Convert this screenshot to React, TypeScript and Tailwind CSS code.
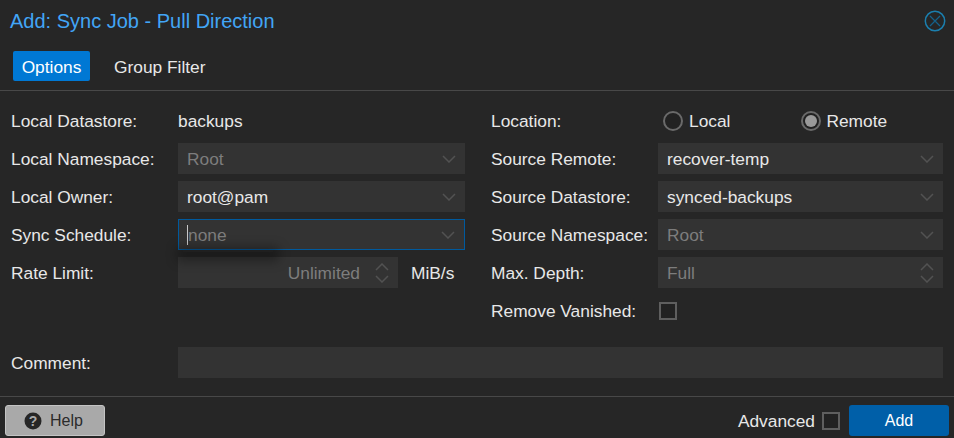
import React from "react";

const Chevron = ({ up = false }: { up?: boolean }) => (
  <svg width="14" height="8" viewBox="0 0 14 8" fill="none" stroke="#525252" strokeWidth="1.5" className={up ? "rotate-180" : ""}>
    <path d="M1 1 L7 7 L13 1" />
  </svg>
);

const Label = ({ children }: { children: React.ReactNode }) => (
  <div className="w-[167px] shrink-0 whitespace-nowrap pt-px text-[#e8e8e8]">{children}</div>
);

const Field = ({
  value,
  dim = false,
  focus = false,
}: {
  value: string;
  dim?: boolean;
  focus?: boolean;
}) => (
  <div
    className={`relative flex h-[31px] flex-1 items-center justify-between bg-[#333333] pl-[9px] pr-[9px] ${
      focus ? "border border-[#005a9e] pl-[8px] pr-[8px]" : ""
    } ${dim ? "text-[#7d7d7d]" : "text-[#e8e8e8]"}`}
  >
    {focus && <span className="absolute left-[8px] top-[5px] h-[20px] w-px bg-[#c8c8c8]" />}
    <span className="pt-px">{value}</span>
    <Chevron />
  </div>
);

const Spinner = () => (
  <div className="flex flex-col gap-[4px]">
    <Chevron up />
    <Chevron />
  </div>
);

const Row = ({ label, children }: { label: string; children: React.ReactNode }) => (
  <div className="flex h-[31px] items-center">
    <Label>{label}</Label>
    {children}
  </div>
);

const Check = () => <div className="h-[18px] w-[18px] border-2 border-[#5f5f5f] bg-[#222222]" />;

export default function App() {
  return (
    <div className="flex h-[438px] w-[954px] flex-col overflow-hidden bg-[#262626] font-['Liberation_Sans',Arial,sans-serif] text-[17.33px] leading-[20px] text-[#e8e8e8]">
      <div className="flex h-[41px] shrink-0 items-center justify-between pl-[10px] pr-[8px]">
        <div className="text-[20px] text-[#42a5f5]">Add: Sync Job - Pull Direction</div>
        <svg width="22" height="22" viewBox="0 0 22 22" fill="none" className="mt-px">
          <circle cx="11" cy="11" r="9.7" stroke="#1b7fae" strokeWidth="1.5" />
          <path d="M6 6 L16 16 M16 6 L6 16" stroke="#15618a" strokeWidth="1.3" />
        </svg>
      </div>

      <div className="flex h-[50px] shrink-0 items-start gap-[24px] border-b border-[#484848] pl-[13px] pt-[10px]">
        <div className="flex h-[30px] w-[77px] items-center justify-center rounded-[2px] bg-[#0078d4] pt-px text-white">Options</div>
        <div className="flex h-[30px] items-center pt-px text-[#e8e8e8]">Group Filter</div>
      </div>

      <div className="flex flex-1 flex-col px-[11px] pt-[14px]">
        <div className="grid grid-cols-[454px_452px] gap-x-[26px]">
          <div className="flex flex-col gap-[7px]">
            <Row label="Local Datastore:"><span className="pt-px">backups</span></Row>
            <Row label="Local Namespace:"><Field value="Root" dim /></Row>
            <Row label="Local Owner:"><Field value="root@pam" /></Row>
            <div className="relative">
              <Row label="Sync Schedule:"><Field value="none" dim focus /></Row>
              <div className="absolute left-[172px] top-[31px] h-[2px] w-[90px] bg-[#1f1f1f] shadow-[0_3px_11px_6px_rgba(0,0,0,0.34)]" />
            </div>
            <Row label="Rate Limit:">
              <div className="flex h-[31px] w-[220px] items-center justify-end gap-[15px] bg-[#333333] pr-[9px] text-[#7d7d7d]">
                <span className="pt-px">Unlimited</span>
                <Spinner />
              </div>
              <span className="ml-[13px] pt-px">MiB/s</span>
            </Row>
          </div>
          <div className="flex flex-col gap-[7px]">
            <Row label="Location:">
              <div className="ml-[5px] flex items-center gap-[6px] pt-[1px]">
                <span className="h-[20px] w-[20px] rounded-full border-2 border-[#6a6a6a] bg-[#222222]" />
                <span>Local</span>
              </div>
              <div className="ml-[71px] flex items-center gap-[4px] pt-[1px]">
                <span className="flex h-[20px] w-[20px] items-center justify-center rounded-full border-2 border-[#6a6a6a] bg-[#222222]">
                  <span className="h-[12px] w-[12px] rounded-full bg-[#9a9a9a]" />
                </span>
                <span className="pl-px">Remote</span>
              </div>
            </Row>
            <Row label="Source Remote:"><Field value="recover-temp" /></Row>
            <Row label="Source Datastore:"><Field value="synced-backups" /></Row>
            <Row label="Source Namespace:"><Field value="Root" dim /></Row>
            <Row label="Max. Depth:">
              <div className="flex h-[31px] flex-1 items-center justify-between bg-[#333333] pl-[9px] pr-[9px] text-[#7d7d7d]">
                <span className="pt-px">Full</span>
                <Spinner />
              </div>
            </Row>
            <Row label="Remove Vanished:"><span className="ml-px mt-px"><Check /></span></Row>
          </div>
        </div>
        <div className="mt-[21px] flex h-[31px] items-center">
          <Label>Comment:</Label>
          <div className="h-[31px] flex-1 bg-[#333333]" />
        </div>
      </div>

      <div className="flex h-[42px] shrink-0 items-start justify-between border-t border-[#484848] pl-[5px] pr-[5px] pt-[8px]">
        <div className="flex h-[31px] w-[100px] items-center gap-[8px] rounded-[3px] border border-[#c4c4c4] bg-[#a9a9a9] pl-[18px] text-[16px] text-[#2b2b2b]">
          <svg width="18" height="18" viewBox="0 0 18 18">
            <circle cx="9" cy="9" r="8.5" fill="#262626" />
            <text x="9" y="14" textAnchor="middle" fontSize="14" fontWeight="700" fill="#a9a9a9" fontFamily="Liberation Sans">?</text>
          </svg>
          <span>Help</span>
        </div>
        <div className="flex items-center">
          <span className="pt-px">Advanced</span>
          <span className="ml-[7px]"><Check /></span>
          <div className="ml-[9px] flex h-[31px] w-[100px] items-center justify-center rounded-[3px] bg-[#005fa8] text-[16px] text-white">Add</div>
        </div>
      </div>
    </div>
  );
}
